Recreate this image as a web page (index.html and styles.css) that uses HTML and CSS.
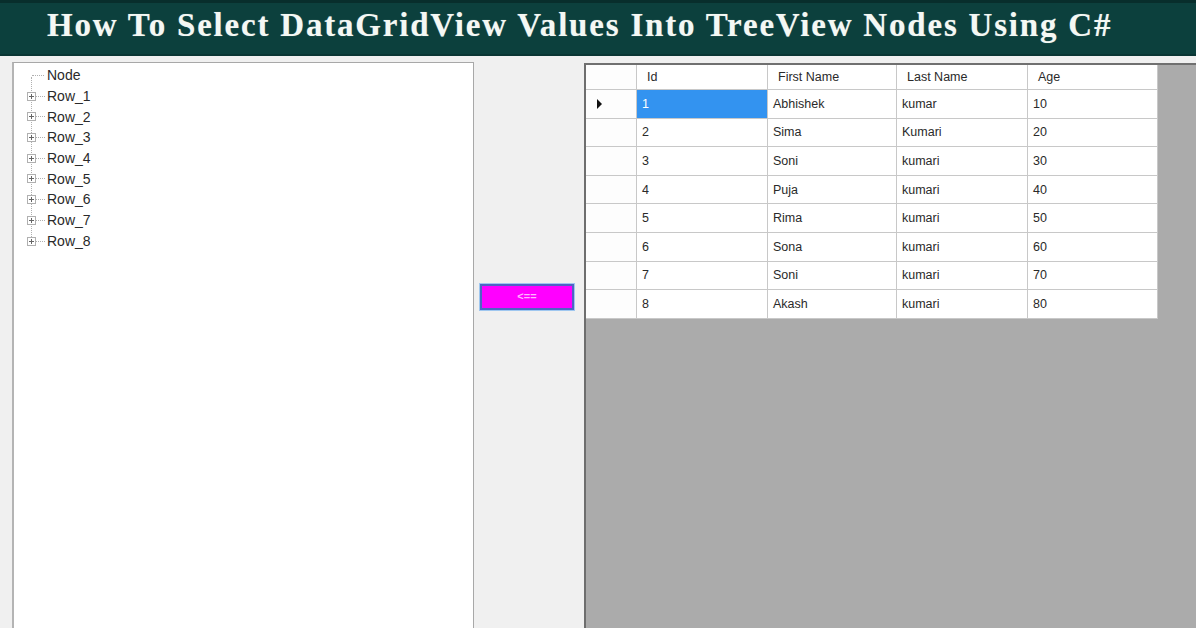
FILE: index.html
```html
<!DOCTYPE html>
<html>
<head>
<meta charset="utf-8">
<link rel="stylesheet" href="styles.css">
</head>
<body>
<div class="title">How To Select DataGridView Values Into TreeView Nodes Using C#</div>
<div class="main">
  <div class="tree">
    <div class="tree-lines"></div>
    <div class="node root"><span class="hline"></span><span class="label">Node</span></div>
    <div class="node"><span class="plus"></span><span class="hline"></span><span class="label">Row_1</span></div>
    <div class="node"><span class="plus"></span><span class="hline"></span><span class="label">Row_2</span></div>
    <div class="node"><span class="plus"></span><span class="hline"></span><span class="label">Row_3</span></div>
    <div class="node"><span class="plus"></span><span class="hline"></span><span class="label">Row_4</span></div>
    <div class="node"><span class="plus"></span><span class="hline"></span><span class="label">Row_5</span></div>
    <div class="node"><span class="plus"></span><span class="hline"></span><span class="label">Row_6</span></div>
    <div class="node"><span class="plus"></span><span class="hline"></span><span class="label">Row_7</span></div>
    <div class="node"><span class="plus"></span><span class="hline"></span><span class="label">Row_8</span></div>
  </div>
  <div class="middle">
    <div class="btn">&lt;==</div>
  </div>
  <div class="gridview">
    <div class="grid">
      <div class="hc rh"></div><div class="hc">Id</div><div class="hc">First Name</div><div class="hc">Last Name</div><div class="hc">Age</div>

      <div class="c rh"><span class="arrow"></span></div><div class="c sel">1</div><div class="c">Abhishek</div><div class="c">kumar</div><div class="c">10</div>
      <div class="c rh"></div><div class="c">2</div><div class="c">Sima</div><div class="c">Kumari</div><div class="c">20</div>
      <div class="c rh"></div><div class="c">3</div><div class="c">Soni</div><div class="c">kumari</div><div class="c">30</div>
      <div class="c rh"></div><div class="c">4</div><div class="c">Puja</div><div class="c">kumari</div><div class="c">40</div>
      <div class="c rh"></div><div class="c">5</div><div class="c">Rima</div><div class="c">kumari</div><div class="c">50</div>
      <div class="c rh"></div><div class="c">6</div><div class="c">Sona</div><div class="c">kumari</div><div class="c">60</div>
      <div class="c rh"></div><div class="c">7</div><div class="c">Soni</div><div class="c">kumari</div><div class="c">70</div>
      <div class="c rh"></div><div class="c">8</div><div class="c">Akash</div><div class="c">kumari</div><div class="c">80</div>
    </div>
  </div>
</div>
</body>
</html>
```
FILE: styles.css
```css
* { box-sizing: border-box; }
html, body { margin: 0; padding: 0; }
body {
  width: 1196px;
  height: 628px;
  overflow: hidden;
  background: #f0f0f0;
  font-family: "Liberation Sans", Arial, sans-serif;
}
.title {
  height: 56px;
  background: #0c403d;
  border-top: 3px solid #082e2c;
  border-bottom: 2px solid #0a3634;
  color: #f4f8f4;
  font-family: "Liberation Serif", "Times New Roman", serif;
  font-weight: bold;
  font-size: 33px;
  line-height: 44px;
  padding-left: 47px;
  white-space: nowrap;
  letter-spacing: 1.8px;
  text-shadow: 0 0 1px rgba(255,255,255,0.4);
}
.main {
  display: flex;
  height: 572px;
  padding-top: 6px;
}
.tree {
  position: relative;
  margin-left: 12px;
  width: 462px;
  background: #ffffff;
  border: 1px solid #a8a8a8;
  border-left: 2px solid #b4b4b4;
  border-bottom: none;
  padding-top: 2px;
}
.tree-lines {
  position: absolute;
  left: 17px;
  top: 14px;
  height: 164px;
  border-left: 1px dotted #b0b0b0;
}
.node {
  position: relative;
  height: 20.7px;
  display: flex;
  align-items: center;
  padding-left: 33px;
  font-size: 14px;
  color: #2a2a2a;
}
.hline {
  position: absolute;
  left: 18px;
  top: 10px;
  width: 13px;
  border-top: 1px dotted #b0b0b0;
}
.root .hline { left: 18px; width: 12px; }
.plus {
  position: absolute;
  left: 13px;
  top: 6px;
  width: 9px;
  height: 9px;
  border: 1px solid #b0b0b0;
  background: #fff;
  z-index: 1;
}
.plus::before {
  content: "";
  position: absolute;
  left: 1px; top: 3px;
  width: 5px; height: 1px;
  background: #666;
}
.plus::after {
  content: "";
  position: absolute;
  left: 3px; top: 1px;
  width: 1px; height: 5px;
  background: #666;
}
.middle {
  width: 110px;
  padding-top: 222px;
  padding-left: 6px;
}
.btn {
  width: 94px;
  height: 26px;
  background: #ff00ff;
  border: 2px solid #4f63c4;
  outline: 1px solid #9fc7f0;
  color: #ffb8ff;
  font-size: 11px;
  font-weight: bold;
  text-align: center;
  line-height: 21px;
}
.gridview {
  flex: 1;
  background: #ababab;
  border-left: 2px solid #6e6e6e;
  border-top: 2px solid #707070;
  margin-top: 1px;
}
.grid {
  display: grid;
  grid-template-columns: 51px 131px 129px 131px 130px;
  grid-template-rows: 25px repeat(8, 28.6px);
  width: 572px;
  background: #ffffff;
}
.hc, .c {
  border-right: 1px solid #c8c8c8;
  border-bottom: 1px solid #c8c8c8;
  font-size: 12.5px;
  color: #2a2a2a;
  display: flex;
  align-items: center;
  white-space: nowrap;
}
.hc { padding-left: 10px; }
.c { padding-left: 5px; }
.rh { border-right: 1px solid #c8c8c8; background: #fdfdfd; }
.sel { background: #3393f0; color: #ffffff; }
.arrow {
  width: 0; height: 0;
  margin-left: 6px;
  border-top: 5px solid transparent;
  border-bottom: 5px solid transparent;
  border-left: 5px solid #111;
}
```
